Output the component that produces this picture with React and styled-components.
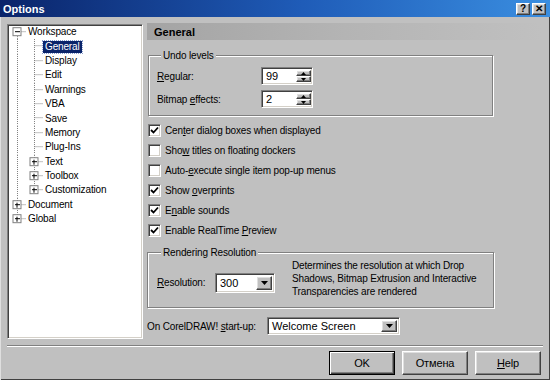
import React from "react";
import styled, { createGlobalStyle, css } from "styled-components";

const GlobalStyle = createGlobalStyle`
  html, body {
    margin: 0;
    padding: 0;
    background: #c0c0c0;
  }
  body {
    font-family: "Liberation Sans", Arial, sans-serif;
    font-size: 10px;
    letter-spacing: -0.15px;
    color: #000;
  }
`;

const sunken = css`
  border: 1px solid;
  border-color: #808080 #fff #fff #808080;
  box-shadow: inset 1px 1px 0 #404040, inset -1px -1px 0 #d4d0c8;
`;

const raised = css`
  border: 1px solid;
  border-color: #fff #404040 #404040 #fff;
  box-shadow: inset -1px -1px 0 #808080, inset 1px 1px 0 #dfdfdf;
  background: #c0c0c0;
`;

const Window = styled.div`
  width: 550px;
  height: 380px;
  background: #c0c0c0;
  display: flex;
  flex-direction: column;
  box-sizing: border-box;
  box-shadow: inset 1px 0 0 #dfdfdf, inset -1px -1px 0 #404040;
  overflow: hidden;
`;

const TitleBar = styled.div`
  height: 17px;
  flex: none;
  display: flex;
  align-items: center;
  padding: 0 4px 0 3px;
  background: linear-gradient(90deg, #0a246a 0%, #1f5cb8 55%, #3a8ee0 100%);
  color: #fff;
  font-weight: bold;
  font-size: 11px;
  letter-spacing: 0;
`;

const TitleText = styled.span`
  flex: 1;
`;

const TitleButton = styled.div`
  ${raised};
  width: 14px;
  height: 12px;
  box-sizing: border-box;
  margin-left: 2px;
  display: flex;
  align-items: center;
  justify-content: center;
  color: #000;
  font-weight: bold;
  font-size: 10px;
  line-height: 1;
`;

const Body = styled.div`
  display: flex;
  gap: 4px;
  padding: 6px 8px 0 7px;
  height: 316px;
  flex: none;
`;

const TreePanel = styled.div`
  ${sunken};
  box-sizing: border-box;
  width: 136px;
  height: 315px;
  margin-top: 1px;
  background: #fff;
  padding: 0 0 0 1px;
`;

const TreeRow = styled.div`
  height: 14.4px;
  display: flex;
  align-items: center;
  white-space: nowrap;
`;

const TreeLabel = styled.span`
  padding: 0 2px;
  line-height: 12px;
  ${(p) =>
    p.$selected &&
    css`
      background: #0a246a;
      color: #fff;
      outline: 1px dotted #8aa0d0;
    `}
`;

const RightPanel = styled.div`
  width: 395px;
  display: flex;
  flex-direction: column;
`;

const Header = styled.div`
  height: 17px;
  flex: none;
  display: flex;
  align-items: center;
  padding-left: 7px;
  font-weight: bold;
  font-size: 11px;
  letter-spacing: 0;
  background: linear-gradient(90deg, #a4a4a4 0%, #b4b4b4 50%, #c0c0c0 100%);
`;

const Group = styled.fieldset`
  margin: ${(p) => p.$mt}px 0 0 ${(p) => p.$ml}px;
  width: ${(p) => p.$w}px;
  box-sizing: border-box;
  min-inline-size: 0;
  border: 1px solid #808080;
  box-shadow: inset 1px 1px 0 #fff, 1px 1px 0 #fff;
  padding: ${(p) => p.$pad};
`;

const Legend = styled.legend`
  padding: 0 2px;
  margin-left: 4px;
  line-height: 13px;
  background: #c0c0c0;
`;

const SpinGrid = styled.div`
  display: grid;
  grid-template-columns: 104px 52px;
  row-gap: 5px;
  align-items: center;
`;

const Field = styled.div`
  ${sunken};
  box-sizing: border-box;
  width: ${(p) => p.$w}px;
  height: ${(p) => p.$h}px;
  background: #fff;
  display: flex;
  align-items: center;
  padding: 2px 2px 2px 4px;
  font-size: 11px;
  letter-spacing: 0;
`;

const FieldText = styled.span`
  flex: 1;
`;

const SpinButtons = styled.div`
  display: flex;
  flex-direction: column;
  width: 15px;
  height: 100%;
`;

const SpinButton = styled.div`
  ${raised};
  flex: 1;
  box-sizing: border-box;
  display: flex;
  align-items: center;
  justify-content: center;
`;

const DropButton = styled.div`
  ${raised};
  width: 16px;
  height: 100%;
  box-sizing: border-box;
  display: flex;
  align-items: center;
  justify-content: center;
`;

const CheckList = styled.div`
  margin-top: 4px;
  display: flex;
  flex-direction: column;
`;

const CheckRow = styled.div`
  height: 20px;
  display: flex;
  align-items: center;
  gap: 4px;
  padding-left: 1px;
`;

const CheckBox = styled.div`
  ${sunken};
  box-sizing: border-box;
  width: 13px;
  height: 13px;
  background: #fff;
  display: flex;
  align-items: center;
  justify-content: center;
`;

const ResRow = styled.div`
  display: flex;
  align-items: center;
`;

const ResControl = styled.div`
  display: flex;
  align-items: center;
  margin-top: 8px;
`;

const Label = styled.span`
  width: ${(p) => p.$w}px;
  flex: none;
  white-space: nowrap;
`;

const Description = styled.div`
  margin-left: 17px;
  line-height: 13px;
  white-space: nowrap;
`;

const StartRow = styled.div`
  margin-top: 9px;
  display: flex;
  align-items: center;
`;

const Separator = styled.div`
  margin: 6px 7px 0 7px;
  border-top: 1px solid #808080;
  border-bottom: 1px solid #fff;
`;

const ButtonRow = styled.div`
  display: flex;
  justify-content: flex-end;
  gap: 7px;
  padding: 4px 9px 0 0;
`;

const PushButton = styled.div`
  ${raised};
  box-sizing: border-box;
  width: 66px;
  height: 24px;
  display: flex;
  align-items: center;
  justify-content: center;
  font-size: 11px;
  ${(p) =>
    p.$default &&
    css`
      border: 1px solid #000;
      box-shadow: inset 1px 1px 0 #fff, inset -1px -1px 0 #404040,
        inset -2px -2px 0 #808080;
    `}
`;

const Arrow = ({ up, size = 3 }) => (
  <svg width={size * 2 + 1} height={size + 1} viewBox={`0 0 ${size * 2 + 1} ${size + 1}`}>
    <polygon
      points={
        up
          ? `0,${size + 1} ${size * 2 + 1},${size + 1} ${size + 0.5},0`
          : `0,0 ${size * 2 + 1},0 ${size + 0.5},${size + 1}`
      }
      fill="#000"
    />
  </svg>
);

const CheckMark = () => (
  <svg width="9" height="9" viewBox="0 0 9 9">
    <path d="M1 4 L3.5 6.5 L8 1.5" stroke="#000" strokeWidth="1.8" fill="none" />
  </svg>
);

const U = styled.span`
  text-decoration: underline;
`;

function Mn({ text, at }) {
  if (at < 0) return text;
  return (
    <>
      {text.slice(0, at)}
      <U>{text[at]}</U>
      {text.slice(at + 1)}
    </>
  );
}

const treeRows = [
  { label: "Workspace", level: 0, box: "minus", root: "down" },
  { label: "General", level: 1, selected: true },
  { label: "Display", level: 1 },
  { label: "Edit", level: 1 },
  { label: "Warnings", level: 1 },
  { label: "VBA", level: 1 },
  { label: "Save", level: 1 },
  { label: "Memory", level: 1 },
  { label: "Plug-Ins", level: 1 },
  { label: "Text", level: 1, box: "plus" },
  { label: "Toolbox", level: 1, box: "plus" },
  { label: "Customization", level: 1, box: "plus", last: true },
  { label: "Document", level: 0, box: "plus", root: "through" },
  { label: "Global", level: 0, box: "plus", root: "up" },
];

const H = 14.4;
const C = 7.2;
const dot = { stroke: "#808080", strokeWidth: 1, strokeDasharray: "1 1" };

function Expander({ cx, type }) {
  return (
    <g>
      <rect x={cx - 4.5} y={C - 4.5} width="8" height="8" fill="#fff" stroke="#808080" />
      <line x1={cx - 2.5} y1={C - 0.5} x2={cx + 2.5} y2={C - 0.5} stroke="#000" />
      {type === "plus" && <line x1={cx - 0.5} y1={C - 2.5} x2={cx - 0.5} y2={C + 2.5} stroke="#000" />}
    </g>
  );
}

function Guide({ row }) {
  const w = row.level * 17 + 17;
  const rootX = 8.5;
  const childX = 25.5;
  let rootLine = null;
  if (row.level === 1 || row.root === "through") {
    rootLine = <line x1={rootX} y1="0" x2={rootX} y2={H} style={dot} />;
  } else if (row.root === "down") {
    rootLine = <line x1={rootX} y1={C} x2={rootX} y2={H} style={dot} />;
  } else if (row.root === "up") {
    rootLine = <line x1={rootX} y1="0" x2={rootX} y2={C} style={dot} />;
  }
  const cx = row.level === 0 ? rootX : childX;
  return (
    <svg width={w} height={H} viewBox={`0 0 ${w} ${H}`} style={{ flex: "none" }}>
      {rootLine}
      {row.level === 1 && (
        <line x1={childX} y1="0" x2={childX} y2={row.last ? C : H} style={dot} />
      )}
      <line x1={cx} y1={C - 0.5} x2={w} y2={C - 0.5} style={dot} />
      {row.box && <Expander cx={cx} type={row.box} />}
    </svg>
  );
}

function Spin({ value }) {
  return (
    <Field $w={52} $h={18} style={{ paddingRight: 1 }}>
      <FieldText>{value}</FieldText>
      <SpinButtons>
        <SpinButton>
          <Arrow up size={2} />
        </SpinButton>
        <SpinButton>
          <Arrow size={2} />
        </SpinButton>
      </SpinButtons>
    </Field>
  );
}

function Combo({ value, w, h }) {
  return (
    <Field $w={w} $h={h} style={{ paddingRight: 2 }}>
      <FieldText>{value}</FieldText>
      <DropButton>
        <Arrow size={3} />
      </DropButton>
    </Field>
  );
}

const checks = [
  { text: "Center dialog boxes when displayed", at: 3, on: true },
  { text: "Show titles on floating dockers", at: 3, on: false },
  { text: "Auto-execute single item pop-up menus", at: 5, on: false },
  { text: "Show overprints", at: 5, on: true },
  { text: "Enable sounds", at: 1, on: true },
  { text: "Enable RealTime Preview", at: 16, on: true },
];

export default function App() {
  return (
    <>
      <GlobalStyle />
      <Window>
        <TitleBar>
          <TitleText>Options</TitleText>
          <TitleButton>?</TitleButton>
          <TitleButton>✕</TitleButton>
        </TitleBar>
        <Body>
          <TreePanel>
            {treeRows.map((row) => (
              <TreeRow key={row.label}>
                <Guide row={row} />
                <TreeLabel $selected={row.selected}>{row.label}</TreeLabel>
              </TreeRow>
            ))}
          </TreePanel>
          <RightPanel>
            <Header>General</Header>
            <Group $mt={9} $ml={1} $w={345} $pad="5px 8px 7px 8px">
              <Legend>Undo levels</Legend>
              <SpinGrid>
                <span>
                  <Mn text="Regular:" at={0} />
                </span>
                <Spin value="99" />
                <span>
                  Bitmap <Mn text="effects:" at={0} />
                </span>
                <Spin value="2" />
              </SpinGrid>
            </Group>
            <CheckList>
              {checks.map((c) => (
                <CheckRow key={c.text}>
                  <CheckBox>{c.on && <CheckMark />}</CheckBox>
                  <span>
                    <Mn text={c.text} at={c.at} />
                  </span>
                </CheckRow>
              ))}
            </CheckList>
            <Group $mt={6} $ml={0} $w={347} $pad="0 8px 9px 9px">
              <Legend>Rendering Resolution</Legend>
              <ResRow>
                <ResControl>
                  <Label $w={58}>
                    <Mn text="Resolution:" at={0} />
                  </Label>
                  <Combo value="300" w={60} h={20} />
                </ResControl>
                <Description>
                  Determines the resolution at which Drop
                  <br />
                  Shadows, Bitmap Extrusion and Interactive
                  <br />
                  Transparencies are rendered
                </Description>
              </ResRow>
            </Group>
            <StartRow>
              <Label $w={120}>
                On CorelDRAW! <Mn text="start-up:" at={0} />
              </Label>
              <Combo value="Welcome Screen" w={133} h={18} />
            </StartRow>
          </RightPanel>
        </Body>
        <Separator />
        <ButtonRow>
          <PushButton $default>OK</PushButton>
          <PushButton>Отмена</PushButton>
          <PushButton>
            <Mn text="Help" at={0} />
          </PushButton>
        </ButtonRow>
      </Window>
    </>
  );
}
